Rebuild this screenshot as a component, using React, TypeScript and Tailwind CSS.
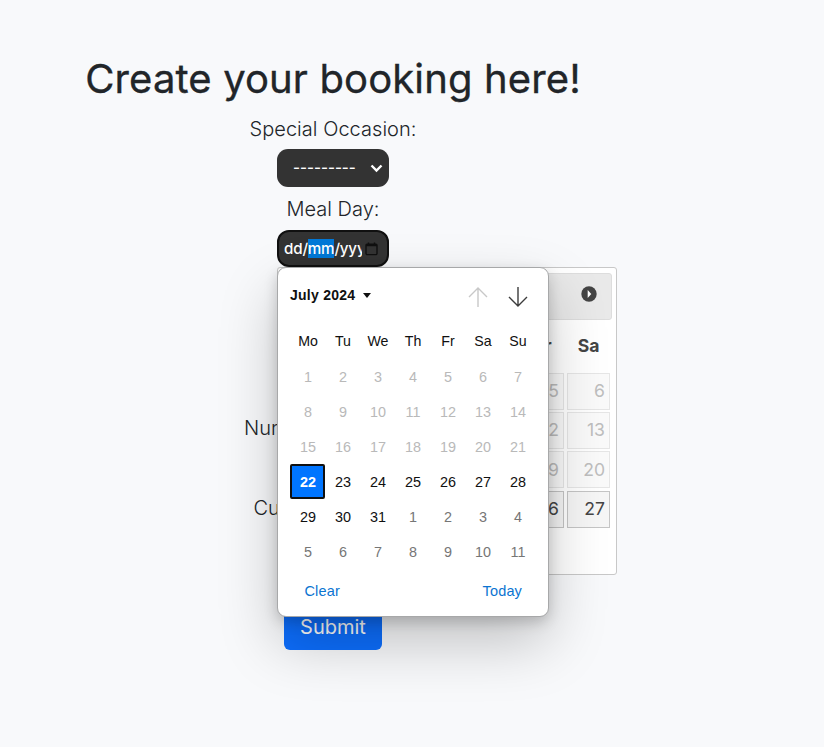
import React from "react";

const weekdays = ["Mo", "Tu", "We", "Th", "Fr", "Sa", "Su"];
const days = [
  ...Array.from({ length: 31 }, (_, i) => ({ n: i + 1, next: false })),
  ...Array.from({ length: 11 }, (_, i) => ({ n: i + 1, next: true })),
];

function dayClass(n: number, next: boolean) {
  if (next) return "text-[#767676]";
  if (n === 22) return "rounded-[2px] border-2 border-[#101010] bg-[#0075ff] font-bold text-white";
  return n < 22 ? "text-[#b9b9b9]" : "text-[#101010]";
}

function DatePopup() {
  return (
    <div className="absolute top-[267px] left-[277px] flex h-[350px] w-[272px] flex-col rounded-[9px] border border-[#a7a8a9] bg-white font-['Liberation_Sans',Arial,sans-serif] text-[14px] leading-4 text-[#101010] shadow-[0_26px_58px_rgba(0,0,0,0.22),0_5px_14px_rgba(0,0,0,0.18)]">
      <div className="flex h-[55px] items-center pl-[12px]">
        <span className="-mt-[2px] w-[73px] text-[14px] font-bold tracking-[0.25px] whitespace-nowrap">July 2024</span>
        <svg width="8" height="5" viewBox="0 0 8 5"><path d="M0 0h8L4 5z" fill="#101010" /></svg>
        <svg className="mt-[2px] ml-[97px]" width="20" height="22" viewBox="0 0 20 22" fill="none" stroke="#c8c8c8" strokeWidth="1.4"><path d="M10 21V2M1 11l9-9 9 9" /></svg>
        <svg className="mt-[2px] ml-5" width="20" height="22" viewBox="0 0 20 22" fill="none" stroke="#3c3c3c" strokeWidth="1.4"><path d="M10 1v19M1 11l9 9 9-9" /></svg>
      </div>
      <div className="ml-[12.5px] grid w-[245px] grid-cols-7">
        {weekdays.map((d) => (
          <div key={d} className="flex h-[36px] items-center justify-center text-[14.2px]">{d}</div>
        ))}
      </div>
      <div className="ml-[12px] grid w-[245px] auto-rows-[35px] grid-cols-7">
        {days.map(({ n, next }, i) => (
          <div key={i} className={`flex items-center justify-center pl-px text-[14.4px] ${dayClass(n, next)}`}>{n}</div>
        ))}
      </div>
      <div className="flex justify-between pt-[14px] pr-[26px] pl-[26.5px] text-[14.5px] tracking-[0.15px] text-[#0b74d1]">
        <span>Clear</span>
        <span>Today</span>
      </div>
    </div>
  );
}

function WidgetCalendar() {
  return (
    <div className="absolute top-[267px] left-[277px] h-[308px] w-[340px] rounded-[3px] border border-[#c8c8c8] bg-white font-['Inter',sans-serif] text-[17.6px] text-[#454545]">
      <div className="mt-[5px] ml-[3px] flex h-[47px] w-[331px] items-center justify-end rounded-[3px] border border-[#dddddd] bg-[#e9e9e9] pr-[14px]">
        <svg className="-mt-[5px]" width="16" height="16" viewBox="0 0 16 16"><circle cx="8" cy="8" r="7.7" fill="#444" /><path d="M6.7 3.9v8.2l3.6-4.1z" fill="#fff" /></svg>
      </div>
      <div className="ml-[242px] grid w-[91px] grid-cols-[44px_43px] gap-x-[3px] pt-[13px] text-center font-bold">
        <span className="pl-[2px]">Fr</span><span>Sa</span>
      </div>
      <div className="mt-[13.5px] ml-[242px] grid w-[91px] auto-rows-[37px] grid-cols-[44px_43px] gap-x-[3px] gap-y-[2.3px]">
        {[5, 6, 12, 13, 19, 20, 26, 27].map((n) => (
          <div key={n} className={`flex items-center justify-end border pr-[4px] ${n > 21 ? "border-[#c5c5c5] bg-[#f6f6f6] text-[#454545]" : "border-[#e6e6e6] bg-[#fafafa] text-[#bebebe]"}`}>{n}</div>
        ))}
      </div>
    </div>
  );
}

export default function App() {
  return (
    <main className="relative h-[747px] w-[824px] overflow-hidden bg-[#f8f9fb] font-['Inter',sans-serif] text-[#212529]">
      <form className="ml-[85px] flex w-[496px] flex-col items-center pt-[55px] text-[20px] font-light">
        <h1 className="h-[59px] text-[40px] leading-[48px] font-normal tracking-[0.13px] whitespace-nowrap [-webkit-text-stroke:0.35px_#212529]">Create your booking here!</h1>
        <label className="flex h-[30px] items-center tracking-[0.03px]">Special Occasion:</label>
        <div className="mt-[5px] flex h-[38px] w-[112px] items-center justify-between rounded-[11px] bg-[#333333] pr-[6px] pl-[16px] text-[15.1px] font-medium text-white">
          <span>---------</span>
          <svg width="13" height="9" viewBox="0 0 13 9" fill="none" stroke="white" strokeWidth="2.4"><path d="M1.5 1.5l5 5 5-5" /></svg>
        </div>
        <label className="mt-[7px] flex h-[30px] items-center">Meal Day:</label>
        <div className="mt-[6px] flex h-[37px] w-[112px] items-center rounded-[12px] border-2 border-[#101010] bg-[#333333] pl-[5px] text-[15.2px] font-medium text-white">
          <span className="-mt-px flex w-[78px] overflow-hidden leading-[19px] tracking-[-0.2px]">dd/<span className="bg-[#0078d7]">mm</span>/yyyy</span>
          <svg className="ml-[3px]" width="13" height="14" viewBox="0 0 13 14" fill="none" stroke="#101010" strokeWidth="1.4"><rect x="1" y="2.2" width="11" height="10.4" rx="1" /><path d="M1 3.6h11M3.5 .5v2.5M9.5 .5v2.5" /></svg>
        </div>
        <label className="mt-[146px] flex h-[30px] w-[178px] items-center whitespace-nowrap">Number of Guests:</label>
        <label className="mt-[50px] flex h-[30px] w-[159px] items-center whitespace-nowrap">Customer Name:</label>
        <button type="button" className="mt-[81px] h-[46px] w-[98px] rounded-[6px] bg-[#0d6efd] text-[20px] font-normal text-white">Submit</button>
      </form>
      <WidgetCalendar />
      <DatePopup />
    </main>
  );
}
